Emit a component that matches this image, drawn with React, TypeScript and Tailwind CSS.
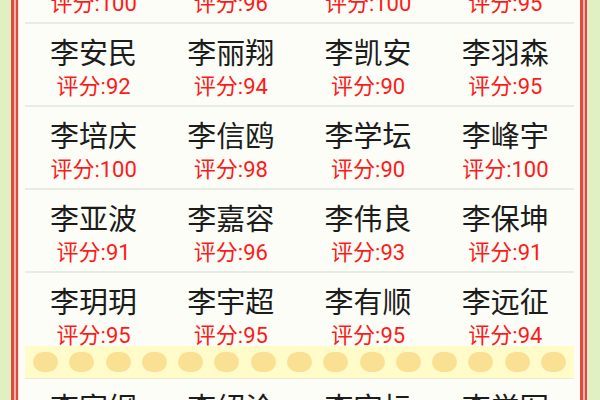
import React from 'react';

type Person = { name: string; score: number };

const rows: Person[][] = [
    [
        { name: '李建国', score: 100 },
        { name: '李明轩', score: 96 },
        { name: '李志豪', score: 100 },
        { name: '李文博', score: 95 },
    ],
    [
        { name: '李安民', score: 92 },
        { name: '李丽翔', score: 94 },
        { name: '李凯安', score: 90 },
        { name: '李羽森', score: 95 },
    ],
    [
        { name: '李培庆', score: 100 },
        { name: '李信鸥', score: 98 },
        { name: '李学坛', score: 90 },
        { name: '李峰宇', score: 100 },
    ],
    [
        { name: '李亚波', score: 91 },
        { name: '李嘉容', score: 96 },
        { name: '李伟良', score: 93 },
        { name: '李保坤', score: 91 },
    ],
    [
        { name: '李玥玥', score: 95 },
        { name: '李宇超', score: 95 },
        { name: '李有顺', score: 95 },
        { name: '李远征', score: 94 },
    ],
];

const nextRow: Person[] = [
    { name: '李家纲', score: 93 },
    { name: '李绍沧', score: 96 },
    { name: '李宏标', score: 92 },
    { name: '李学军', score: 97 },
];

function NameRow({ people, short }: { people: Person[]; short?: boolean }) {
    return (
        <div className={`grid grid-cols-4 ${short ? 'h-[73px]' : 'h-[81px]'}`}>
            {people.map((p) => (
                <div key={p.name} className="flex flex-col items-center pt-[13px]">
                    <div className="text-[29px] leading-[34px] text-[#1c1c1c]">{p.name}</div>
                    <div className="mt-[4px] text-[22px] leading-[24px] text-[#ff1a1a]">评分:{p.score}</div>
                </div>
            ))}
        </div>
    );
}

function Divider() {
    return <div className="h-[2px] bg-[#e9ece4]" />;
}

function Frame() {
    // double red rule down each side
    return (
        <div className="flex shrink-0">
            <div className="w-[3px] bg-[#dc4a40]" />
            <div className="w-[2px] bg-[#f3b4aa]" />
            <div className="w-[2px] bg-[#dc4a40]" />
            <div className="w-[1px] bg-[#f8e2da]" />
        </div>
    );
}

export default function App() {
    const dots = Array.from({ length: 15 }, (_, i) => i);

    return (
        <div
            className="flex h-[400px] w-[600px] overflow-hidden bg-[#fbfdf6]"
            style={{ fontFamily: 'Roboto, "Noto Sans CJK SC", sans-serif' }}
        >
            <div className="w-[11px] shrink-0 bg-[#e0f0c2]" />
            <Frame />
            <div className="flex-1 overflow-hidden px-[6px]">
                <div className="mt-[-59px]">
                    <NameRow people={rows[0]} />
                    {rows.slice(1).map((r, i) => (
                        <React.Fragment key={i}>
                            <Divider />
                            <NameRow people={r} short={i === rows.length - 2} />
                        </React.Fragment>
                    ))}

                    {/* decorative band */}
                    <div className="flex h-[33px] items-center justify-between border-b border-[#ecebd0] bg-[#fffcca] px-[8px]">
                        {dots.map((d) => (
                            <div key={d} className="h-[20px] w-[25px] rounded-full bg-[#f9e093]" />
                        ))}
                    </div>

                    <NameRow people={nextRow} />
                </div>
            </div>
            <div className="flex shrink-0 flex-row-reverse">
                <Frame />
            </div>
            <div className="w-[12px] shrink-0 bg-[#e0f0c2]" />
        </div>
    );
}
